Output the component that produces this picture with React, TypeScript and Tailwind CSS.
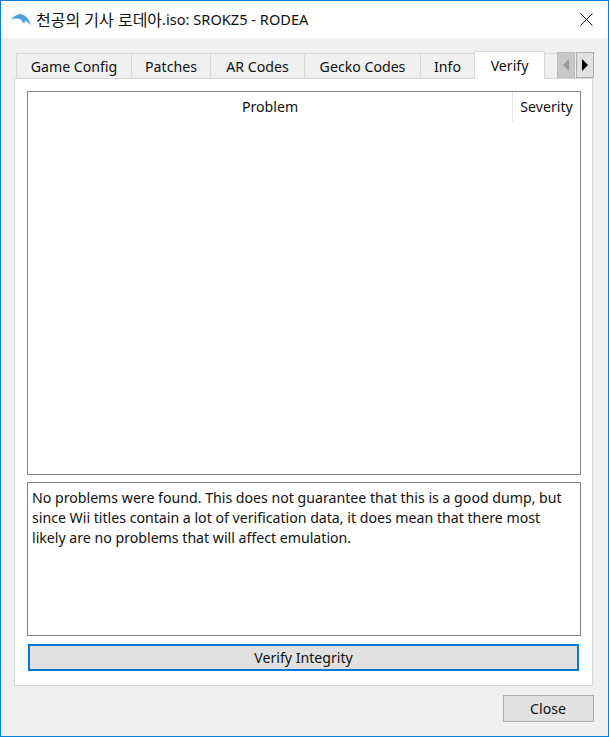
const font = '[font-family:"Noto_Sans","Noto_Sans_CJK_KR",sans-serif]';

const tabs = [
  { label: 'Game Config', width: 'w-[116px]' },
  { label: 'Patches', width: 'w-[80px]' },
  { label: 'AR Codes', width: 'w-[95px]' },
  { label: 'Gecko Codes', width: 'w-[117px]' },
  { label: 'Info', width: 'w-[55px]' },
];

function Dolphin() {
  return (
    <svg width="21" height="13" viewBox="0 0 21 13" className="shrink-0">
      <path
        d="M0.5 7C2.5 4 5.5 2 8.5 1.4L10.5 0.3L11.5 1.4C15.5 2 19.5 5.5 20.5 12.5C18.5 9.5 16.5 8 14.5 7.4L15 10C13.5 10 12 9 11 6.5C7.5 5 3.5 5.4 0.5 7Z"
        fill="#4aa3dc"
      />
    </svg>
  );
}

export default function App() {
  return (
    <div className={`${font} w-[609px] h-[737px] border border-[#0b7fd6] flex flex-col text-[14.15px] text-[#111] bg-[#f0f0f0] overflow-hidden`}>
      <div className="h-[37px] bg-white flex items-center pl-[9px] shrink-0">
        <Dolphin />
        <span className="ml-[5px] whitespace-nowrap text-[16px]">천공의 기사 로데아</span>
        <span className="whitespace-nowrap text-[14.6px]">.iso: SROKZ5 - RODEA</span>
        <svg width="13" height="13" viewBox="0 0 13 13" className="ml-auto mr-[15px]">
          <path d="M0.5 0.5L12.5 12.5M12.5 0.5L0.5 12.5" stroke="#111" strokeWidth="1" fill="none" />
        </svg>
      </div>

      <div className="flex-1 flex flex-col px-[13px] pt-[13px]">
        <div className="relative h-[27px] flex items-end pl-[2px] shrink-0">
          {tabs.map(tab => (
            <div
              key={tab.label}
              className={`${tab.width} h-[25px] -mr-px pt-[2px] border border-b-0 border-[#d9d9d9] bg-[#f0f0f0] flex items-center justify-center whitespace-nowrap`}
            >
              {tab.label}
            </div>
          ))}
          <div className="w-[71px] h-[28px] -mb-px pt-[1px] border border-b-0 border-[#d9d9d9] bg-white flex items-center justify-center relative z-10">
            Verify
          </div>
          {/* next tab, hidden behind the scroll buttons */}
          <div className="w-[50px] h-[25px] border-t border-[#d9d9d9]" />
          <div className="absolute left-[543px] top-[1px] w-[18px] h-[26px] bg-[#c8c8c8] border border-[#bdbdbd] flex items-center justify-center">
            <span className="w-0 h-0 border-y-[6px] border-y-transparent border-r-[6px] border-r-[#9a9a9a]" />
          </div>
          <div className="absolute left-[562px] top-[1px] w-[18px] h-[26px] bg-[#e1e1e1] border border-[#adadad] flex items-center justify-center">
            <span className="w-0 h-0 border-y-[6px] border-y-transparent border-l-[6px] border-l-black" />
          </div>
        </div>

        <div className="h-[608px] w-[579px] border border-[#d9d9d9] bg-white flex flex-col pt-[12px] pl-[12px]">
          <div className="h-[384px] w-[554px] border border-[#828790] shrink-0">
            <div className="h-[30px] flex">
              <div className="w-[484px] flex items-center justify-center">Problem</div>
              <div className="flex-1 border-l border-[#e5e5e5] flex items-center justify-center">Severity</div>
            </div>
          </div>
          <div className="mt-[7px] h-[154px] w-[554px] border border-[#828282] px-[4px] pt-[5px] leading-[20px] shrink-0">
            <p className="whitespace-nowrap">No problems were found. This does not guarantee that this is a good dump, but</p>
            <p className="whitespace-nowrap">since Wii titles contain a lot of verification data, it does mean that there most</p>
            <p className="whitespace-nowrap">likely are no problems that will affect emulation.</p>
          </div>
          <button className="mt-[8px] ml-px w-[551px] h-[27px] border-2 border-[#0078d7] bg-[#e1e1e1] flex items-center justify-center shrink-0">
            Verify Integrity
          </button>
        </div>

        <div className="flex justify-end pt-[9px] pr-[1px]">
          <button className="w-[91px] h-[27px] pt-px pr-px border border-[#adadad] bg-[#e1e1e1] flex items-center justify-center">
            Close
          </button>
        </div>
      </div>
    </div>
  );
}
